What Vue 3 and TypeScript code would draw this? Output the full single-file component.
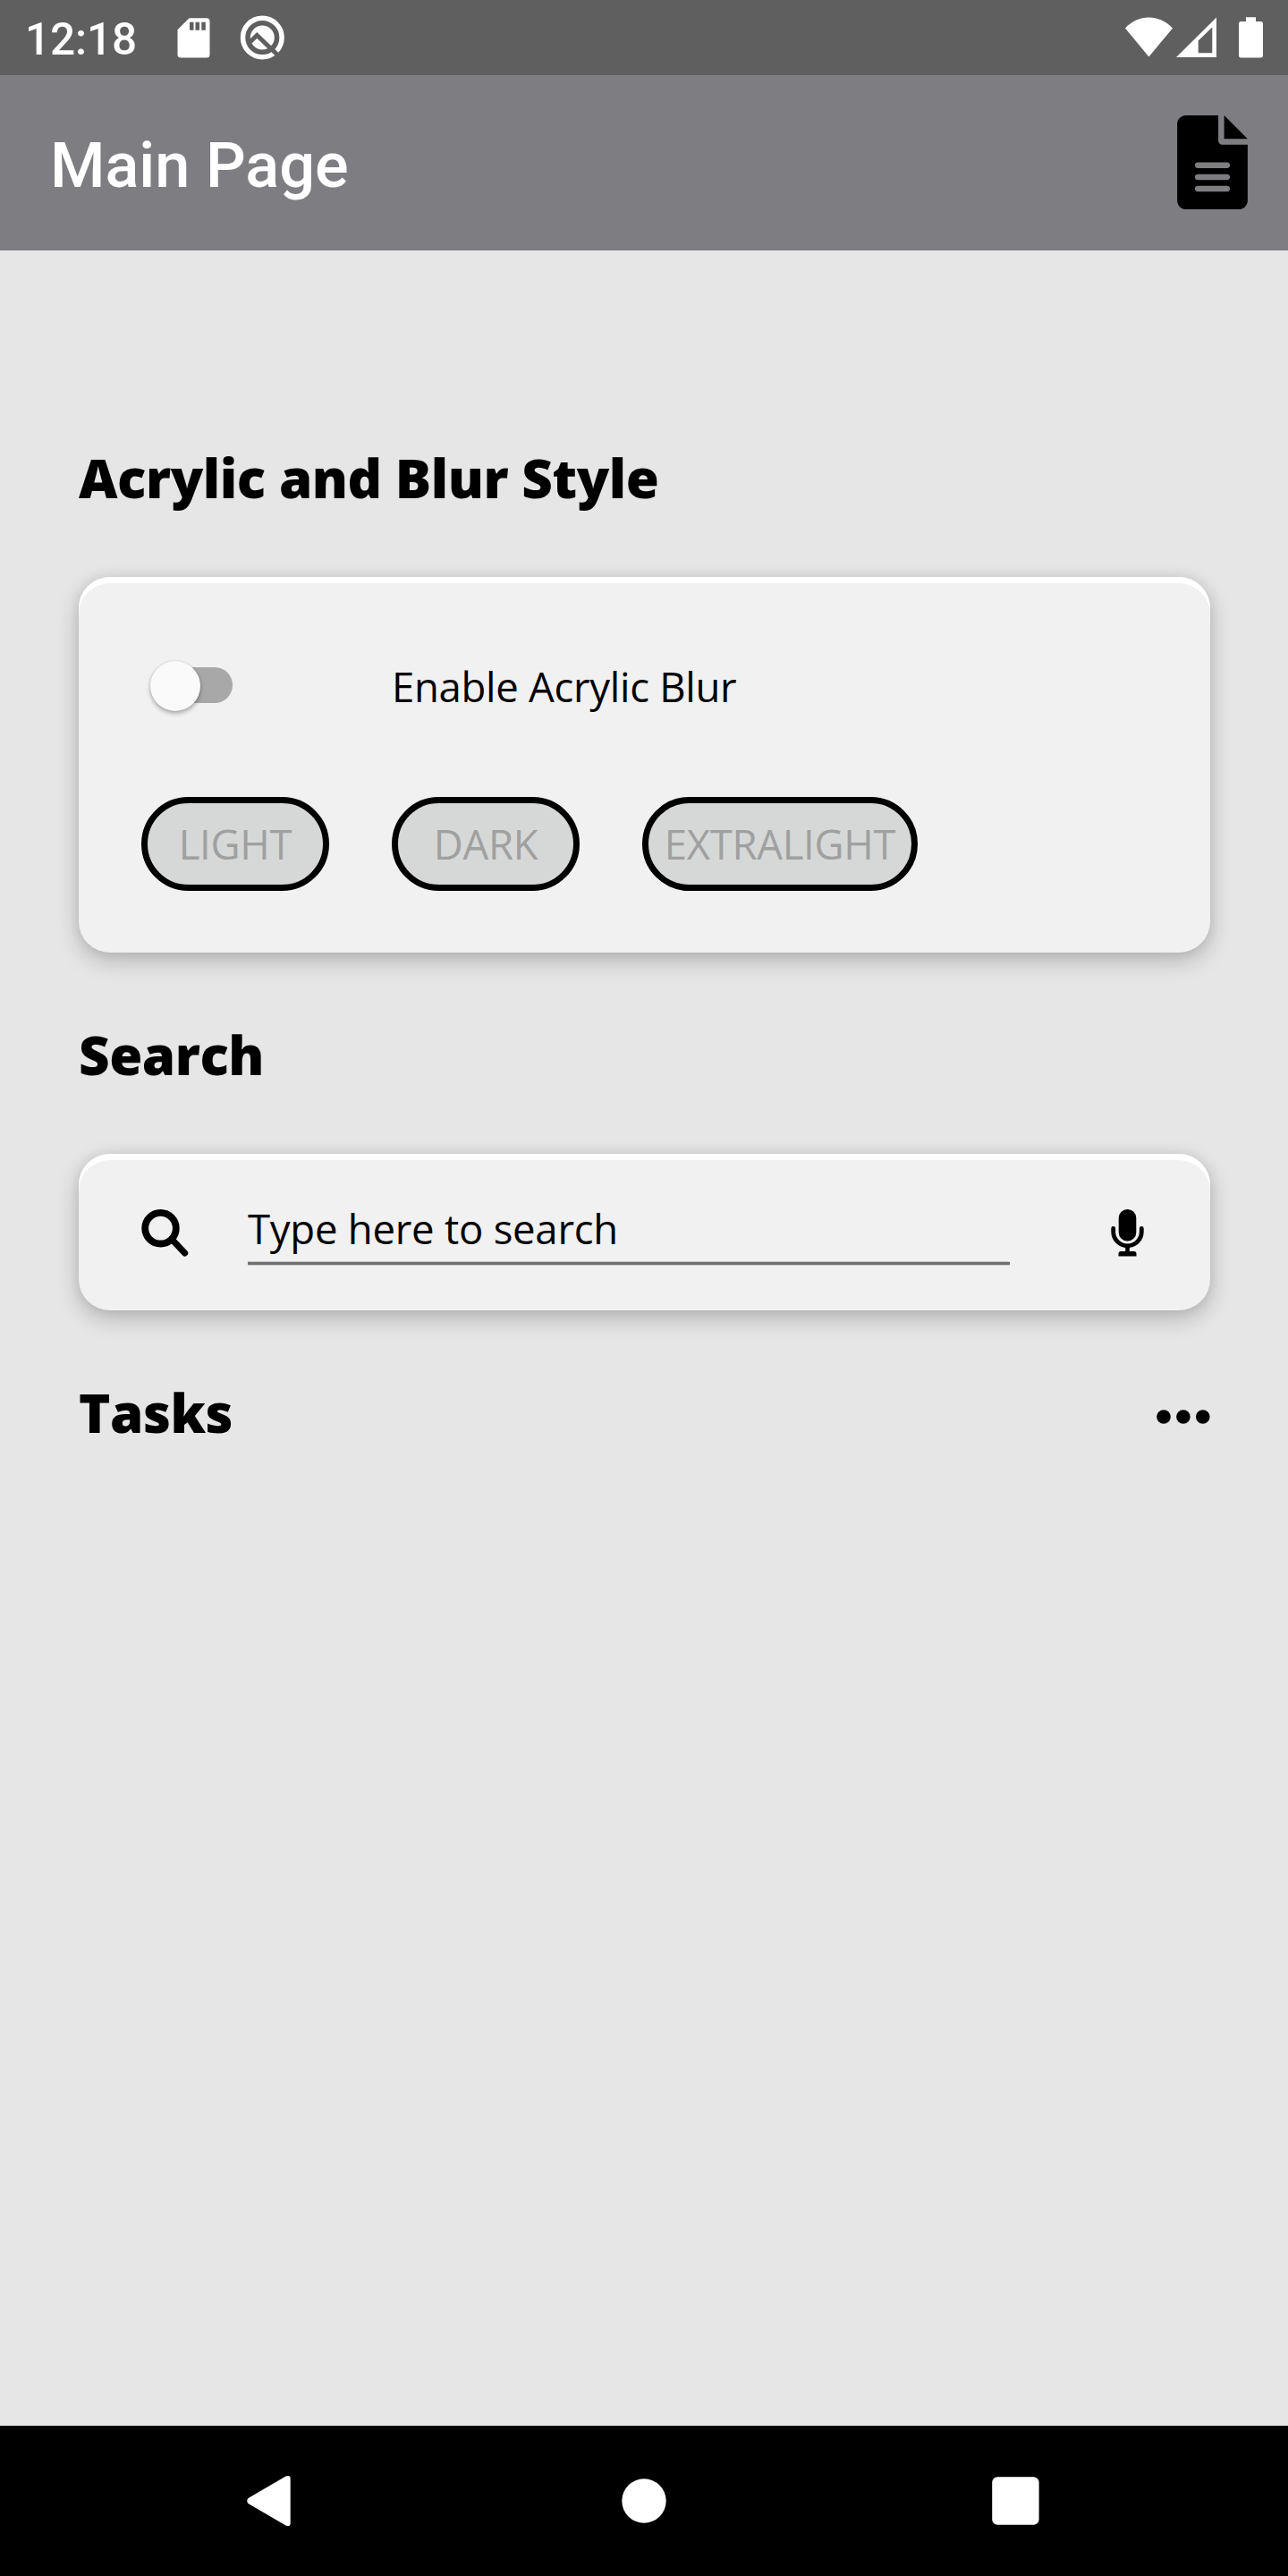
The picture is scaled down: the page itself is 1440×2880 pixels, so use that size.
<script setup lang="ts">
interface StyleOption {
  label: string
  wide: boolean
}

const options: StyleOption[] = [
  { label: 'LIGHT', wide: false },
  { label: 'DARK', wide: false },
  { label: 'EXTRALIGHT', wide: true },
]
</script>

<template>
  <div class="screen">
    <div class="status">
      <span class="clock">12:18</span>
      <svg class="sd" width="37" height="45" viewBox="0 0 37 45">
        <path fill="#fff" fill-rule="evenodd" d="M13.5 0.300H33a3.500 3.500 0 0 1 3.500 3.500V41a3.500 3.500 0 0 1-3.500 3.500H4A3.500 3.500 0 0 1 .5 41V13.300ZM14 4.700V13.700H18.500V4.700ZM20.500 4.700V13.700H25V4.700ZM27.300 4.700V13.700H31.800V4.700Z" />
      </svg>
      <svg class="q" width="50" height="50" viewBox="0 0 50 50">
        <circle cx="25.300" cy="25" r="21.800" fill="none" stroke="#fff" stroke-width="5.500" />
        <circle cx="25.300" cy="25" r="13.500" fill="#fff" />
        <path d="M11 30.500L19.300 22.500L44 46" fill="none" stroke="#5f5f60" stroke-width="5" />
      </svg>
      <svg class="signals" width="156" height="46" viewBox="0 0 156 46">
        <path fill="#fff" d="M2 12.500C17-3.500 40-3.500 55 12.500L28.400 44.500Z" />
        <path fill="#fff" fill-rule="evenodd" d="M59 45L104 .5V45ZM83.700 26.500V40.300H99.300V11.500Z" />
        <path fill="#fff" d="M137 .2h11V5h5.500a2.500 2.500 0 0 1 2.500 2.500V43a2.500 2.500 0 0 1-2.500 2.500h-22A2.500 2.500 0 0 1 129 43V7.500A2.500 2.500 0 0 1 131.500 5H137Z" />
      </svg>
    </div>

    <header class="bar">
      <h1>Main Page</h1>
      <svg width="79" height="105" viewBox="0 0 384 512">
        <path d="M224 136V0H48C21.500 0 0 21.500 0 48v416c0 26.500 21.500 48 48 48h288c26.500 0 48-21.500 48-48V160H248c-13.200 0-24-10.800-24-24zm48 152H112c-8.800 0-16-7.200-16-16s7.200-16 16-16h160c8.800 0 16 7.200 16 16s-7.200 16-16 16zm0 64H112c-8.800 0-16-7.200-16-16s7.200-16 16-16h160c8.800 0 16 7.200 16 16s-7.200 16-16 16zm0 64H112c-8.800 0-16-7.200-16-16s7.200-16 16-16h160c8.800 0 16 7.200 16 16s-7.200 16-16 16zM256 0v128h128L256 0z" />
      </svg>
    </header>

    <main class="content">
      <h2>Acrylic and Blur Style</h2>
      <section class="card style-card">
        <div class="toggle-row">
          <span class="switch"><span class="track"></span><span class="thumb"></span></span>
          <span class="label">Enable Acrylic Blur</span>
        </div>
        <div class="buttons">
          <button v-for="o in options" :key="o.label" :class="{ wide: o.wide }">{{ o.label }}</button>
        </div>
      </section>

      <h2>Search</h2>
      <section class="card search-card">
        <svg class="glass" width="54" height="54" viewBox="0 0 54 54">
          <circle cx="21.500" cy="21.200" r="17.300" fill="none" stroke="#000" stroke-width="7.800" />
          <path d="M34.500 34L48.700 49" stroke="#000" stroke-width="7" stroke-linecap="round" />
        </svg>
        <div class="field">Type here to search</div>
        <svg class="mic" width="37" height="53" viewBox="0 0 37 53">
          <rect x="8.700" y="0" width="19.600" height="35.500" rx="9.800" />
          <path d="M2.700 21.500V25a15.800 15.800 0 0 0 31.600 0V21.500" fill="none" stroke="#000" stroke-width="4.800" stroke-linecap="round" />
          <path d="M16.200 42h4.600v5H26a2.800 2.800 0 0 1 2.500 3v2.500h-20V50a2.800 2.800 0 0 1 2.500-3h5.200Z" />
        </svg>
      </section>

      <div class="tasks">
        <h2>Tasks</h2>
        <svg width="60" height="16" viewBox="0 0 60 16">
          <circle cx="8" cy="8" r="7.800" />
          <circle cx="29.900" cy="8" r="7.800" />
          <circle cx="51.800" cy="8" r="7.800" />
        </svg>
      </div>
    </main>

    <nav class="nav">
      <svg width="49" height="58" viewBox="0 0 49 58">
        <path fill="#fff" d="M1.500 26L43.500 1.500Q48.700-.5 48.700 4V54Q48.700 58.500 43.500 56.500L1.500 32Q-1 29 1.500 26Z" />
      </svg>
      <svg class="home" width="50" height="50" viewBox="0 0 50 50"><circle cx="25" cy="25" r="24.700" fill="#fff" /></svg>
      <svg width="53" height="54" viewBox="0 0 53 54"><rect x=".2" y=".3" width="52.400" height="53.400" rx="6" fill="#fff" /></svg>
    </nav>
  </div>
</template>

<style>
body {
  margin: 0;
}
</style>

<style scoped>
.screen {
  width: 1440px;
  height: 2880px;
  display: flex;
  flex-direction: column;
  background: #e6e6e6;
  overflow: hidden;
  font-family: "Open Sans", sans-serif;
  color: #000;
}
svg {
  display: block;
  flex: none;
}
.status {
  box-sizing: border-box;
  height: 84px;
  flex: none;
  display: flex;
  align-items: flex-start;
  padding: 0 28px;
  background: #5f5f60;
  color: #fff;
}
.clock {
  width: 170px;
  font: 500 49.5px/58px Roboto, sans-serif;
  letter-spacing: -0.1px;
  margin-top: 15px;
  white-space: nowrap;
}
.sd {
  margin-top: 20px;
}
.q {
  margin: 17px 0 0 33px;
}
.signals {
  margin: 19px 0 0 auto;
}
.bar {
  box-sizing: border-box;
  height: 196px;
  flex: none;
  display: flex;
  align-items: flex-start;
  justify-content: space-between;
  padding: 45px 45px 0 56px;
  background: #7e7d82;
}
h1 {
  margin: 15px 0 0;
  font: 500 70.3px/82px Roboto, sans-serif;
  color: #fff;
}
.content {
  flex: 1;
  padding: 209px 87px 0 88px;
}
h2 {
  margin: 0;
  height: 90px;
  font-size: 60px;
  line-height: 90px;
  font-weight: 800;
  font-kerning: none;
  letter-spacing: -0.45px;
  white-space: nowrap;
}
.card {
  box-sizing: border-box;
  border-radius: 35px;
  background: #f1f1f1;
  box-shadow: inset 0 7px 0 #fff, 0 9px 26px rgba(0, 0, 0, 0.22), 0 0 14px rgba(0, 0, 0, 0.07);
}
.style-card {
  height: 420px;
  margin: 66px 0 69px;
  padding: 85px 70px 0;
}
.toggle-row {
  display: flex;
  align-items: center;
  height: 74px;
}
.switch {
  position: relative;
  box-sizing: border-box;
  width: 280px;
  height: 56px;
  padding: 7px 0 0 20px;
}
.track {
  display: block;
  width: 82px;
  height: 40px;
  border-radius: 20px;
  background: #a8a8a8;
}
.thumb {
  position: absolute;
  left: 10px;
  top: 0;
  width: 56px;
  height: 56px;
  border-radius: 50%;
  background: #fafafa;
  box-shadow: 0 3px 5px rgba(0, 0, 0, 0.28), 0 0 3px rgba(0, 0, 0, 0.12);
}
.label {
  font-size: 45.5px;
  line-height: 62px;
  margin-bottom: 1px;
  letter-spacing: -0.3px;
}
.buttons {
  display: flex;
  gap: 70px;
  margin-top: 87px;
}
button {
  box-sizing: border-box;
  width: 210px;
  height: 105px;
  border: 7px solid #000;
  border-radius: 52.5px;
  padding: 0 0 1px;
  background: #d6d8d7;
  color: #a0a0a0;
  font: 400 45.5px/62px "Open Sans", sans-serif;
  letter-spacing: -0.3px;
}
button.wide {
  width: 308px;
}
.search-card {
  display: flex;
  align-items: flex-start;
  height: 175px;
  margin: 66px 0 69px;
  padding: 0 74px 0 70px;
}
.glass {
  margin-top: 62px;
}
.field {
  box-sizing: border-box;
  width: 852px;
  height: 124px;
  margin-left: 65px;
  padding-top: 52px;
  border-bottom: 3px solid #6f7170;
  box-shadow: inset 0 -1px 0 #c4c5c4, 0 1px 0 #c4c5c4;
  font-size: 45.5px;
  line-height: 62px;
  letter-spacing: -0.25px;
}
.mic {
  margin: 62px 0 0 auto;
}
.tasks {
  display: flex;
  justify-content: space-between;
}
.tasks svg {
  margin-top: 42px;
}
.nav {
  height: 168px;
  flex: none;
  display: flex;
  align-items: center;
  padding-left: 276px;
  background: #000;
}
.home {
  margin: 0 364px 0 370px;
}
</style>
